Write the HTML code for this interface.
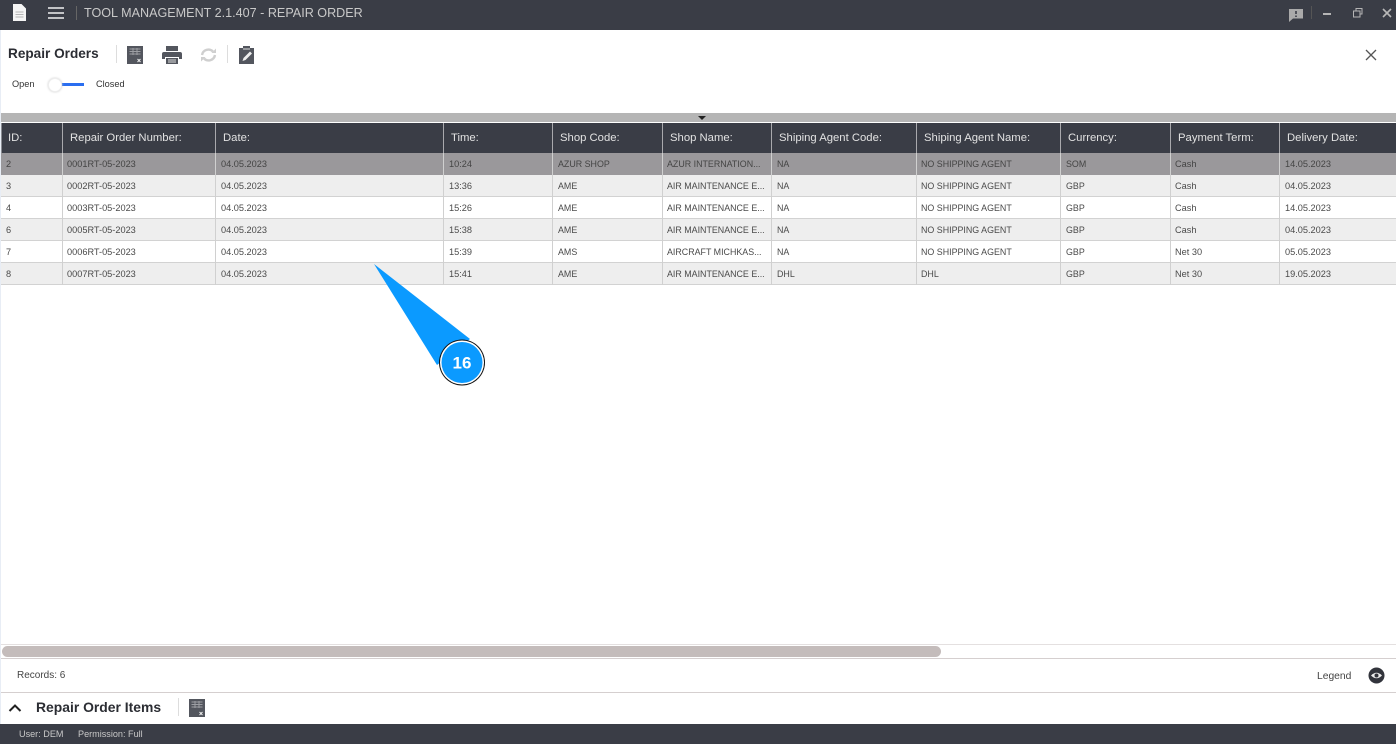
<!DOCTYPE html>
<html><head><meta charset="utf-8">
<style>
html,body{margin:0;padding:0;width:1396px;height:746px;overflow:hidden;background:#fff}
body{position:relative;font-family:"Liberation Sans",sans-serif;color:#3a3c44}
.a{position:absolute;white-space:nowrap}
.h{position:absolute;top:123px;height:30px;line-height:30px;color:#e2e2e2;font-size:11.300px;white-space:nowrap}
.c{position:absolute;font-size:9.200px;line-height:22px;height:22px;color:#4a4a4a;white-space:nowrap}
.u{font-size:8.900px}
.s{color:#444}
.v{position:absolute;width:1px;top:153px;height:132px;background:#d0d0d0}
.w{position:absolute;width:1px;top:123px;height:30px;background:#a9a9ad}
.r{position:absolute;left:1px;width:1395px;height:21px;border-bottom:1px solid #d2d2d2}
svg{position:absolute;display:block}
</style></head><body>
<div class="a" style="left:0;top:0;width:1396px;height:30px;background:#3a3d46"></div>
<svg style="left:12px;top:4px" width="15" height="17" viewBox="0 0 15 17"><path d="M1 0H9.500L14 4.500V17H1Z" fill="#f4f4f4"/><path d="M3.500 8H11.500M3.500 10.500H11.500M3.500 13H11.500" stroke="#b5b5b5" stroke-width="1"/></svg>
<svg style="left:48px;top:7px" width="16" height="12" viewBox="0 0 16 12"><path d="M0 1H16M0 6H16M0 11H16" stroke="#f0f0f0" stroke-width="1.600"/></svg>
<div class="a" style="left:76px;top:6px;width:1px;height:14px;background:#666"></div>
<div class="a" style="left:84px;top:0;line-height:27px;font-size:12.600px;color:#c9c9c9">TOOL MANAGEMENT 2.1.407 - REPAIR ORDER</div>
<svg style="left:1289px;top:8px" width="15" height="15" viewBox="0 0 15 15"><path d="M0 1H14V10.500H4L0 14Z" fill="#aaa"/><path d="M7 3V6M7 7.500V9" stroke="#3a3d46" stroke-width="1.600"/></svg>
<div class="a" style="left:1311px;top:6px;width:1px;height:13px;background:#555"></div>
<div class="a" style="left:1323px;top:13px;width:8px;height:2px;background:#b5b5b5"></div>
<svg style="left:1353px;top:8px" width="10" height="10" viewBox="0 0 10 10"><path d="M3 2.500V.5H9V6H7M.5 3H7V9H.5Z" fill="none" stroke="#b5b5b5"/></svg>
<svg style="left:1382px;top:8px" width="10" height="10" viewBox="0 0 10 10"><path d="M1 1L9 9M9 1L1 9" stroke="#b8b8b8" stroke-width="1.600"/></svg>

<div class="a" style="left:8px;top:45px;font-size:13.600px;line-height:18px;font-weight:bold;color:#2b2d33">Repair Orders</div>
<div class="a" style="left:116px;top:45px;width:1px;height:18px;background:#ddd"></div>
<svg style="left:127px;top:46px" width="16" height="18" viewBox="0 0 16 18"><rect width="16" height="18" fill="#53565e"/><path d="M2.500 3H13.500M2.500 5.500H13.500M2.500 8H13.500M6 2V9M10 2V9" stroke="#9c9ea3" stroke-width="1"/><path d="M10.500 13L13.500 16M13.500 13L10.500 16" stroke="#eee" stroke-width="1"/></svg>
<svg style="left:162px;top:46px" width="20" height="18" viewBox="0 0 20 18"><path d="M4 0H16V5H4Z" fill="#53565e"/><path d="M2 6H18Q20 6 20 8V13H17V11H3V13H0V8Q0 6 2 6Z" fill="#53565e"/><path d="M4 12H16V18H4Z" fill="#53565e"/><path d="M6 14H14M6 16H14" stroke="#ddd"/></svg>
<svg style="left:199px;top:46px" width="19" height="18" viewBox="0 0 19 18"><path d="M3 9A6.500 6.500 0 0 1 14 5.500M16 9A6.500 6.500 0 0 1 5 12.500" fill="none" stroke="#cfcfcf" stroke-width="2.400"/><path d="M12.500 7H17V2.500Z M6.500 11H2V15.500Z" fill="#cfcfcf"/></svg>
<div class="a" style="left:227px;top:45px;width:1px;height:18px;background:#ddd"></div>
<svg style="left:239px;top:46px" width="15" height="18" viewBox="0 0 15 18"><path d="M0 2H4V0H11V2H15V18H0Z" fill="#53565e"/><path d="M4 3H11" stroke="#ddd" stroke-width="1"/><path d="M3.500 15L4.500 12L11 5.500L13 7.500L6.500 14Z" fill="#eee"/></svg>
<svg style="left:1365px;top:49px" width="12" height="12" viewBox="0 0 12 12"><path d="M1 1L11 11M11 1L1 11" stroke="#555" stroke-width="1.300"/></svg>

<div class="a" style="left:12px;top:78px;font-size:9.200px;line-height:13px;color:#333">Open</div>
<div class="a" style="left:58px;top:83px;width:26px;height:2.500px;background:#2a6ef0"></div>
<div class="a" style="left:48px;top:78px;width:12px;height:12px;border-radius:50%;background:#fff;border:1px solid #eee;box-shadow:0 0 2px #ccc"></div>
<div class="a" style="left:96px;top:78px;font-size:9.200px;line-height:13px;color:#333">Closed</div>

<div class="a" style="left:1px;top:113px;width:1395px;height:9px;background:#b5b5b5"></div>
<div class="a" style="left:698px;top:116px;width:0;height:0;border-left:4px solid transparent;border-right:4px solid transparent;border-top:4px solid #222"></div>
<div class="a" style="left:1px;top:123px;width:1395px;height:30px;background:#3a3d46"></div>
<div class="a" style="left:0;top:30px;width:1px;height:694px;background:#e8edf5"></div>
<div class="a" style="left:1px;top:123px;width:1px;height:162px;background:#8a8c92"></div>

<div class="r" style="top:153px;height:22px;background:#9a989b"></div>
<div class="r" style="top:175px;background:#eee"></div>
<div class="r" style="top:197px;background:#fff"></div>
<div class="r" style="top:219px;background:#eee"></div>
<div class="r" style="top:241px;background:#fff"></div>
<div class="r" style="top:263px;background:#eee"></div>

<div class="v" style="left:62px"></div><div class="w" style="left:62px"></div>
<div class="v" style="left:215px"></div><div class="w" style="left:215px"></div>
<div class="v" style="left:443px"></div><div class="w" style="left:443px"></div>
<div class="v" style="left:552px"></div><div class="w" style="left:552px"></div>
<div class="v" style="left:662px"></div><div class="w" style="left:662px"></div>
<div class="v" style="left:771px"></div><div class="w" style="left:771px"></div>
<div class="v" style="left:916px"></div><div class="w" style="left:916px"></div>
<div class="v" style="left:1060px"></div><div class="w" style="left:1060px"></div>
<div class="v" style="left:1170px"></div><div class="w" style="left:1170px"></div>
<div class="v" style="left:1279px"></div><div class="w" style="left:1279px"></div>

<div class="h" style="left:8px">ID:</div>
<div class="h" style="left:70px">Repair Order Number:</div>
<div class="h" style="left:223px">Date:</div>
<div class="h" style="left:451px">Time:</div>
<div class="h" style="left:560px">Shop Code:</div>
<div class="h" style="left:670px">Shop Name:</div>
<div class="h" style="left:779px">Shiping Agent Code:</div>
<div class="h" style="left:924px">Shiping Agent Name:</div>
<div class="h" style="left:1068px">Currency:</div>
<div class="h" style="left:1178px">Payment Term:</div>
<div class="h" style="left:1287px">Delivery Date:</div>

<div class="c s" style="left:6px;top:153px">2</div><div class="c s" style="left:67px;top:153px">0001RT-05-2023</div><div class="c s" style="left:221px;top:153px">04.05.2023</div><div class="c s" style="left:449px;top:153px">10:24</div><div class="c s u" style="left:558px;top:153px">AZUR SHOP</div><div class="c s u" style="left:667px;top:153px">AZUR INTERNATION...</div><div class="c s u" style="left:777px;top:153px">NA</div><div class="c s u" style="left:921px;top:153px">NO SHIPPING AGENT</div><div class="c s u" style="left:1066px;top:153px">SOM</div><div class="c s" style="left:1175px;top:153px">Cash</div><div class="c s" style="left:1285px;top:153px">14.05.2023</div>

<div class="c" style="left:6px;top:175px">3</div><div class="c" style="left:67px;top:175px">0002RT-05-2023</div><div class="c" style="left:221px;top:175px">04.05.2023</div><div class="c" style="left:449px;top:175px">13:36</div><div class="c u" style="left:558px;top:175px">AME</div><div class="c u" style="left:667px;top:175px">AIR MAINTENANCE E...</div><div class="c u" style="left:777px;top:175px">NA</div><div class="c u" style="left:921px;top:175px">NO SHIPPING AGENT</div><div class="c u" style="left:1066px;top:175px">GBP</div><div class="c" style="left:1175px;top:175px">Cash</div><div class="c" style="left:1285px;top:175px">04.05.2023</div>

<div class="c" style="left:6px;top:197px">4</div><div class="c" style="left:67px;top:197px">0003RT-05-2023</div><div class="c" style="left:221px;top:197px">04.05.2023</div><div class="c" style="left:449px;top:197px">15:26</div><div class="c u" style="left:558px;top:197px">AME</div><div class="c u" style="left:667px;top:197px">AIR MAINTENANCE E...</div><div class="c u" style="left:777px;top:197px">NA</div><div class="c u" style="left:921px;top:197px">NO SHIPPING AGENT</div><div class="c u" style="left:1066px;top:197px">GBP</div><div class="c" style="left:1175px;top:197px">Cash</div><div class="c" style="left:1285px;top:197px">14.05.2023</div>

<div class="c" style="left:6px;top:219px">6</div><div class="c" style="left:67px;top:219px">0005RT-05-2023</div><div class="c" style="left:221px;top:219px">04.05.2023</div><div class="c" style="left:449px;top:219px">15:38</div><div class="c u" style="left:558px;top:219px">AME</div><div class="c u" style="left:667px;top:219px">AIR MAINTENANCE E...</div><div class="c u" style="left:777px;top:219px">NA</div><div class="c u" style="left:921px;top:219px">NO SHIPPING AGENT</div><div class="c u" style="left:1066px;top:219px">GBP</div><div class="c" style="left:1175px;top:219px">Cash</div><div class="c" style="left:1285px;top:219px">04.05.2023</div>

<div class="c" style="left:6px;top:241px">7</div><div class="c" style="left:67px;top:241px">0006RT-05-2023</div><div class="c" style="left:221px;top:241px">04.05.2023</div><div class="c" style="left:449px;top:241px">15:39</div><div class="c u" style="left:558px;top:241px">AMS</div><div class="c u" style="left:667px;top:241px">AIRCRAFT MICHKAS...</div><div class="c u" style="left:777px;top:241px">NA</div><div class="c u" style="left:921px;top:241px">NO SHIPPING AGENT</div><div class="c u" style="left:1066px;top:241px">GBP</div><div class="c" style="left:1175px;top:241px">Net 30</div><div class="c" style="left:1285px;top:241px">05.05.2023</div>

<div class="c" style="left:6px;top:263px">8</div><div class="c" style="left:67px;top:263px">0007RT-05-2023</div><div class="c" style="left:221px;top:263px">04.05.2023</div><div class="c" style="left:449px;top:263px">15:41</div><div class="c u" style="left:558px;top:263px">AME</div><div class="c u" style="left:667px;top:263px">AIR MAINTENANCE E...</div><div class="c u" style="left:777px;top:263px">DHL</div><div class="c u" style="left:921px;top:263px">DHL</div><div class="c u" style="left:1066px;top:263px">GBP</div><div class="c" style="left:1175px;top:263px">Net 30</div><div class="c" style="left:1285px;top:263px">19.05.2023</div>

<svg style="left:370px;top:260px" width="120" height="130" viewBox="0 0 120 130">
<path d="M4 4L100 79L67 105Z" fill="#0b9aff"/>
<circle cx="92" cy="102.500" r="23" fill="#111"/>
<circle cx="92" cy="102.500" r="22" fill="#fff"/>
<circle cx="92" cy="102.500" r="20.500" fill="#0b9aff"/>
<text x="92" y="108.500" text-anchor="middle" font-family="Liberation Sans,sans-serif" font-weight="bold" font-size="17" fill="#fff">16</text>
</svg>

<div class="a" style="left:1px;top:644px;width:1395px;height:1px;background:#e4e0e0"></div>
<div class="a" style="left:1px;top:658px;width:1395px;height:1px;background:#d5cfcf"></div>
<div class="a" style="left:2px;top:646px;width:939px;height:11px;border-radius:6px;background:#c4bcbb"></div>
<div class="a" style="left:17px;top:669px;font-size:10px;line-height:14px;color:#444">Records: 6</div>
<div class="a" style="left:1317px;top:670px;font-size:10.300px;line-height:14px;color:#444">Legend</div>
<svg style="left:1368px;top:667px" width="17" height="17" viewBox="0 0 17 17"><circle cx="8.500" cy="8.500" r="8" fill="#32343c"/><path d="M3 8.500Q8.500 3 14 8.500Q8.500 14 3 8.500Z" fill="#eee"/><circle cx="8.500" cy="8.500" r="2" fill="#32343c"/></svg>
<div class="a" style="left:1px;top:692px;width:1395px;height:1px;background:#d5cfcf"></div>
<svg style="left:8px;top:703px" width="14" height="10" viewBox="0 0 14 10"><path d="M1.500 8L7 2.500L12.500 8" fill="none" stroke="#222" stroke-width="2"/></svg>
<div class="a" style="left:36px;top:698px;font-size:13.900px;line-height:18px;font-weight:bold;color:#2b2d33">Repair Order Items</div>
<div class="a" style="left:178px;top:698px;width:1px;height:18px;background:#ddd"></div>
<svg style="left:189px;top:699px" width="16" height="18" viewBox="0 0 16 18"><rect width="16" height="18" fill="#53565e"/><path d="M2.500 3H13.500M2.500 5.500H13.500M2.500 8H13.500M6 2V9M10 2V9" stroke="#9c9ea3" stroke-width="1"/><path d="M10.500 13L13.500 16M13.500 13L10.500 16" stroke="#eee" stroke-width="1"/></svg>
<div class="a" style="left:0;top:724px;width:1396px;height:20px;background:#3a3d46"></div>
<div class="a" style="left:19px;top:727px;font-size:9.100px;line-height:14px;color:#c9c9c9">User: DEM</div>
<div class="a" style="left:78px;top:727px;font-size:9.100px;line-height:14px;color:#c9c9c9">Permission: Full</div>
</body></html>
